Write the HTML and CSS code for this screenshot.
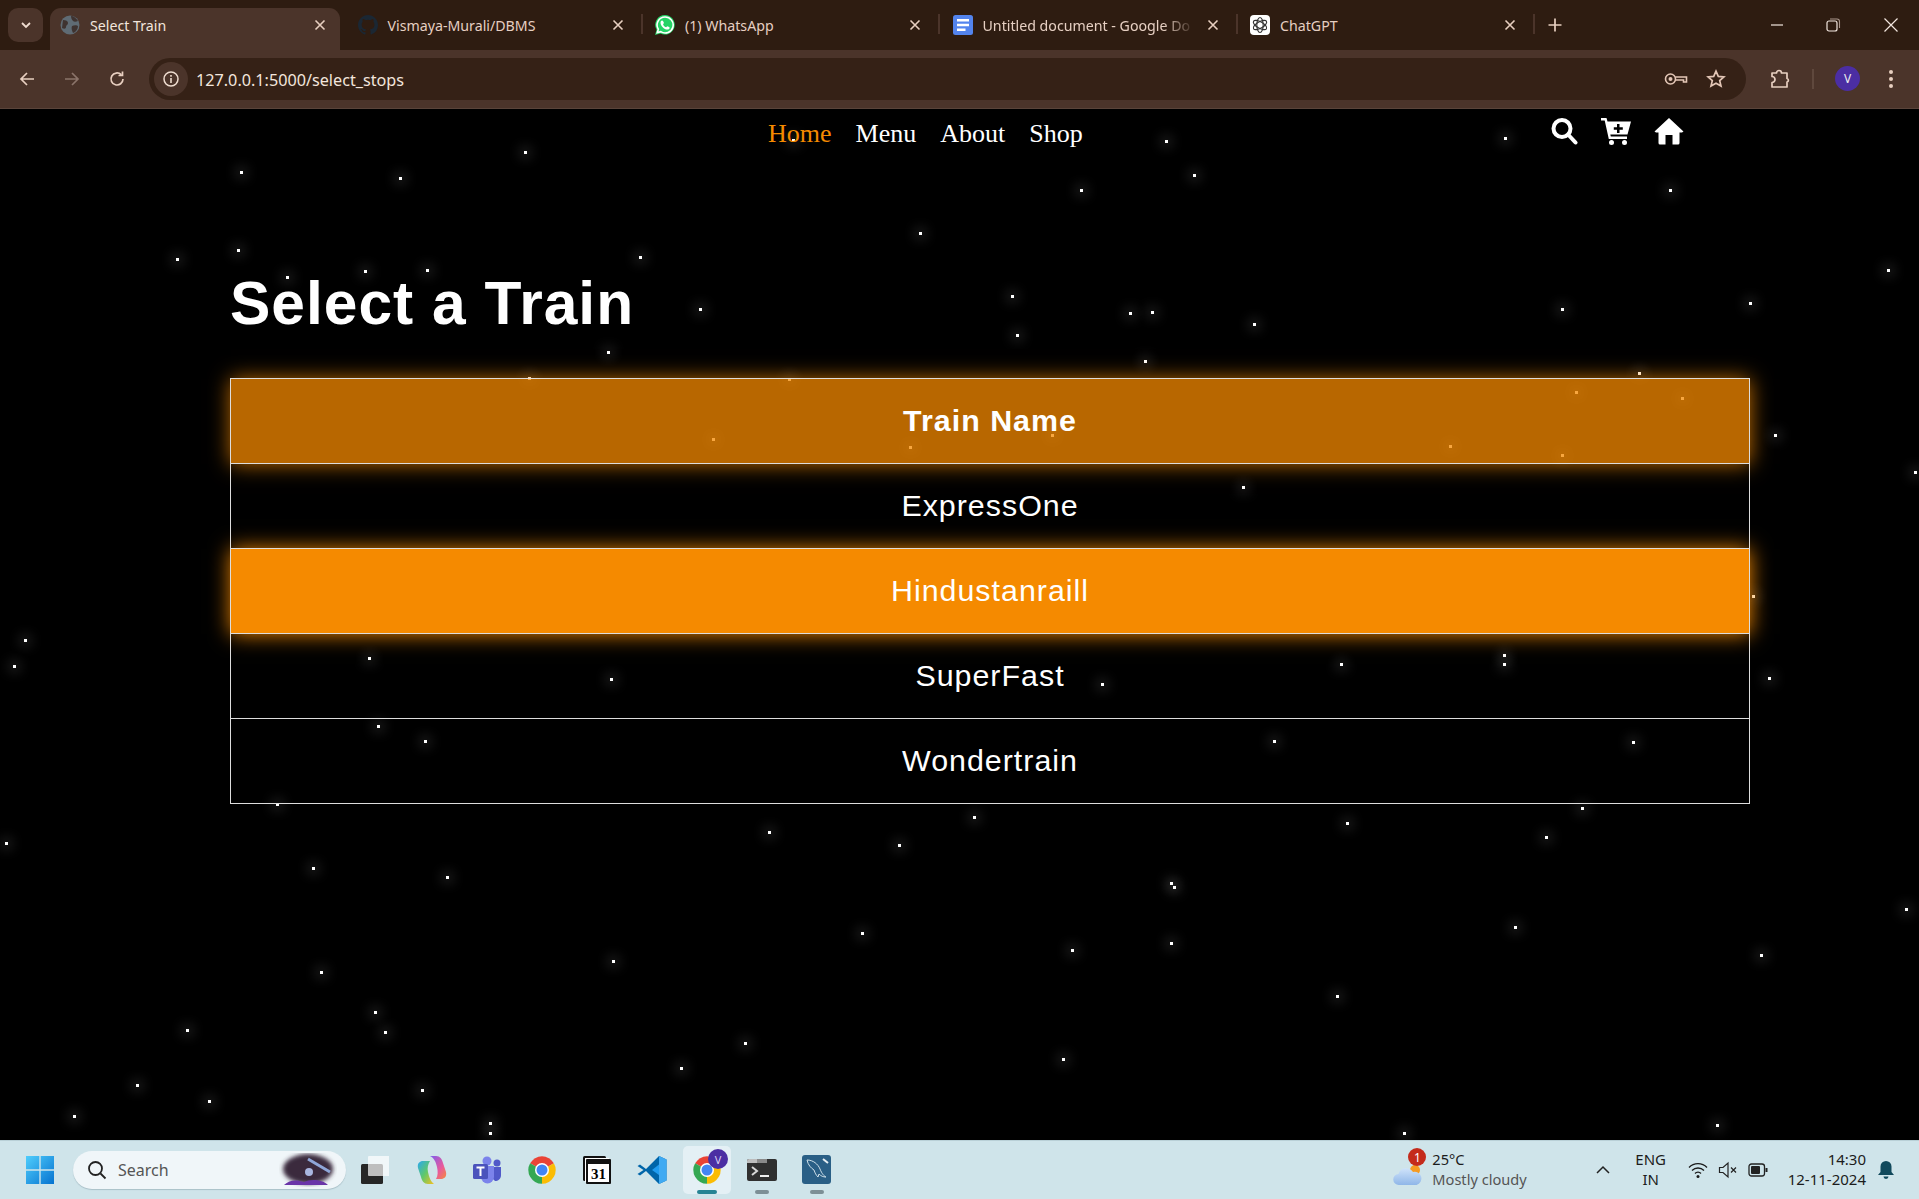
FILE: index.html
```html
<!DOCTYPE html>
<html lang="en">
<head>
    <meta charset="UTF-8">
    <meta name="viewport" content="width=device-width, initial-scale=1.0">
    <title>Select Train</title>
    <link rel="stylesheet" href="styles.css">
</head>
<body>
    <svg class="defs" width="0" height="0">
        <symbol id="chrome" viewBox="0 0 24 24">
            <path fill="#ea4335" d="M12 12L2.500 6.500A11 11 0 0 1 21.500 6.500Z"/>
            <path fill="#fbbc04" d="M12 12L21.500 6.500A11 11 0 0 1 12 23Z"/>
            <path fill="#34a853" d="M12 12L12 23A11 11 0 0 1 2.500 6.500Z"/>
            <circle cx="12" cy="12" r="5.600" fill="#fff"/>
            <circle cx="12" cy="12" r="4.400" fill="#4285f4"/>
        </symbol>
        <symbol id="close" viewBox="0 0 16 16">
            <path d="M3.500 3.500l9 9M12.500 3.500l-9 9" stroke="#e8cfc0" stroke-width="1.600" fill="none"/>
        </symbol>
    </svg>

    <!-- browser tabs -->
    <div class="tabstrip">
        <button class="tab-search">
            <svg width="12" height="12" viewBox="0 0 12 12"><path d="M2 4l4 4 4-4" stroke="#f0dcd0" stroke-width="1.800" fill="none"/></svg>
        </button>
        <div class="tabs">
            <div class="tab active">
                <svg class="favicon" viewBox="0 0 20 20"><circle cx="10" cy="10" r="9.500" fill="#5f6b74"/><path d="M3 5c3 0 5 1 5 3s-2 2-2 4-2 2-4 1zM11 1c3 0 5 2 7 5-2 1-4 1-5 0s-2-3-2-5zM12 11c2-1 5-1 6 0 0 3-2 6-5 7-1-2-2-5-1-7z" fill="#3f3330"/></svg>
                <span class="tab-title">Select Train</span>
                <svg class="tab-close"><use href="#close"/></svg>
            </div>
            <div class="tab">
                <svg class="favicon" viewBox="0 0 16 16"><path fill="#1b2733" d="M8 0C3.580 0 0 3.580 0 8c0 3.540 2.290 6.530 5.470 7.590.4.070.55-.17.55-.38v-1.490c-2.010.37-2.530-.49-2.690-.94-.09-.23-.48-.94-.82-1.130-.28-.15-.68-.52-.01-.53.63-.01 1.080.58 1.230.82.72 1.210 1.870.87 2.330.66.070-.52.28-.87.51-1.070-1.780-.2-3.640-.89-3.640-3.950 0-.87.31-1.590.82-2.150-.08-.2-.36-1.020.08-2.120 0 0 .67-.21 2.200.82a7.600 7.600 0 0 1 4 0c1.530-1.040 2.200-.82 2.200-.82.44 1.100.16 1.920.08 2.120.51.56.82 1.270.82 2.150 0 3.070-1.870 3.750-3.650 3.950.29.25.54.73.54 1.480v2.200c0 .21.15.46.55.38A8 8 0 0 0 16 8c0-4.420-3.580-8-8-8z"/></svg>
                <span class="tab-title">Vismaya-Murali/DBMS</span>
                <svg class="tab-close"><use href="#close"/></svg>
            </div>
            <div class="tab">
                <svg class="favicon" viewBox="0 0 20 20"><path fill="#25d366" d="M10 0a9.800 9.800 0 0 0-8.400 14.800L0 20l5.400-1.500A9.800 9.800 0 1 0 10 0z"/><path fill="none" stroke="#fff" stroke-width="1.600" d="M10 2a8 8 0 0 0-6.700 12.200l-1 3.400 3.500-.9A8 8 0 1 0 10 2z"/><path fill="#fff" d="M7 5.500c-.6 0-1.500.9-1.500 2.300 0 3 3.600 6.800 6.900 6.800 1.300 0 2.300-1 2.300-1.900 0-.5-2-1.500-2.400-1.500-.4 0-.8 1-1.200 1-.8 0-3-2-3-3 0-.4.8-.8.8-1.300 0-.4-.9-2.400-1.900-2.400z"/></svg>
                <span class="tab-title">(1) WhatsApp</span>
                <svg class="tab-close"><use href="#close"/></svg>
            </div>
            <div class="tab">
                <svg class="favicon" viewBox="0 0 20 20"><rect width="20" height="20" rx="2.500" fill="#5384ee"/><path fill="#fff" d="M4 4h12v2.500H4zM4 8.800h12v2.500H4zM4 13.500h8.500V16H4z"/></svg>
                <span class="tab-title tab-fade">Untitled document - Google Do</span>
                <svg class="tab-close"><use href="#close"/></svg>
            </div>
            <div class="tab">
                <svg class="favicon" viewBox="0 0 20 20"><rect width="20" height="20" rx="4" fill="#fff"/><g fill="none" stroke="#333" stroke-width="1.100"><ellipse cx="10" cy="10" rx="3.200" ry="7.500"/><ellipse cx="10" cy="10" rx="3.200" ry="7.500" transform="rotate(60 10 10)"/><ellipse cx="10" cy="10" rx="3.200" ry="7.500" transform="rotate(120 10 10)"/></g></svg>
                <span class="tab-title">ChatGPT</span>
                <svg class="tab-close"><use href="#close"/></svg>
            </div>
        </div>
        <svg class="new-tab" width="16" height="16" viewBox="0 0 16 16"><path d="M8 1.500v13M1.500 8h13" stroke="#e8cfc0" stroke-width="1.700"/></svg>
        <div class="window-controls">
            <svg width="16" height="16" viewBox="0 0 16 16"><path d="M2 8h12" stroke="#f2e6df" stroke-width="1.200"/></svg>
            <svg width="16" height="16" viewBox="0 0 16 16"><rect x="2" y="4" width="10" height="10" rx="2" fill="none" stroke="#f2e6df" stroke-width="1.200"/><path d="M5 2h7a2.500 2.500 0 0 1 2.500 2.500V11" fill="none" stroke="#a9968b" stroke-width="1.100"/></svg>
            <svg width="16" height="16" viewBox="0 0 16 16"><path d="M1.500 1.500l13 13M14.500 1.500l-13 13" stroke="#f2e6df" stroke-width="1.200"/></svg>
        </div>
    </div>

    <!-- address bar -->
    <div class="toolbar">
        <div class="nav-buttons">
            <svg width="20" height="20" viewBox="0 0 20 20"><path d="M17 10H4M10 4l-6 6 6 6" fill="none" stroke="#e8cfc0" stroke-width="1.700"/></svg>
            <svg width="20" height="20" viewBox="0 0 20 20"><path d="M3 10h13M10 4l6 6-6 6" fill="none" stroke="#8b746a" stroke-width="1.700"/></svg>
            <svg width="20" height="20" viewBox="0 0 20 20"><path d="M16 10a6 6 0 1 1-1.800-4.300M15.500 2.500v4h-4" fill="none" stroke="#e8cfc0" stroke-width="1.700"/></svg>
        </div>
        <div class="omnibox">
            <span class="site-info">
                <svg width="18" height="18" viewBox="0 0 18 18"><circle cx="9" cy="9" r="7" fill="none" stroke="#eedccf" stroke-width="1.500"/><path d="M9 8v5M9 5v1.700" stroke="#eedccf" stroke-width="1.600"/></svg>
            </span>
            <span class="url">127.0.0.1:5000/select_stops</span>
            <svg class="omni-key" width="24" height="16" viewBox="0 0 24 16"><circle cx="6.500" cy="8" r="5" fill="none" stroke="#e3c6b6" stroke-width="1.600"/><circle cx="6.500" cy="8" r="2" fill="#e3c6b6"/><path d="M11.500 6h11v5h-3V9h-8" fill="none" stroke="#e3c6b6" stroke-width="1.600"/></svg>
            <svg class="omni-star" width="20" height="20" viewBox="0 0 20 20"><path d="M10 2.200l2.300 5.200 5.600.5-4.200 3.700 1.300 5.500-5-2.900-5 2.900 1.300-5.500-4.200-3.700 5.600-.5z" fill="none" stroke="#e3c6b6" stroke-width="1.700"/></svg>
        </div>
        <svg class="puzzle" width="22" height="22" viewBox="0 0 22 22"><path d="M3 5h4.500a2.500 2.500 0 0 1 5 0H18v5.500a1.800 1.800 0 0 1 0 3.500V19H3v-4.500a3 3 0 0 0 0-6z" fill="none" stroke="#e8cfc0" stroke-width="1.700" stroke-linejoin="round"/></svg>
        <span class="toolbar-sep"></span>
        <span class="avatar">V</span>
        <svg class="menu-dots" width="6" height="20" viewBox="0 0 6 20"><circle cx="3" cy="3" r="2" fill="#e8cfc0"/><circle cx="3" cy="10" r="2" fill="#e8cfc0"/><circle cx="3" cy="17" r="2" fill="#e8cfc0"/></svg>
    </div>

    <!-- the page -->
    <main class="page">
        <div id="stars" class="stars"></div>
        <nav class="navbar">
            <ul class="nav-links">
                <li><a class="current" href="#">Home</a></li>
                <li><a href="#">Menu</a></li>
                <li><a href="#">About</a></li>
                <li><a href="#">Shop</a></li>
            </ul>
            <div class="nav-icons">
                <svg width="28" height="28" viewBox="0 0 28 28"><circle cx="12" cy="11.500" r="8.500" fill="none" stroke="#fff" stroke-width="4"/><path d="M18.500 18l7 7.500" stroke="#fff" stroke-width="4" stroke-linecap="round"/></svg>
                <svg width="32" height="28" viewBox="0 0 32 28"><path fill="#fff" fill-rule="evenodd" d="M1 1h5.500l1 3.500H31l-3.500 13H10.300l.5 2H27v2.500H8.800L4.700 3.500H1zM17 7v3.200h-3.200v2.500H17V16h2.500v-3.300h3.300v-2.500h-3.300V7z"/><circle cx="11.500" cy="25.500" r="2.500" fill="#fff"/><circle cx="24.500" cy="25.500" r="2.500" fill="#fff"/></svg>
                <svg width="30" height="28" viewBox="0 0 30 28"><path fill="#fff" d="M15 1L29.500 14.500 28 15.500H25.500V26a1.500 1.500 0 0 1-1.500 1.500H18.500V18h-7v9.500H6A1.500 1.500 0 0 1 4.500 26V15.500H2L.5 14.500z"/></svg>
            </div>
        </nav>

        <div class="content">
            <h1>Select a Train</h1>
            <table class="train-table">
                <thead>
                    <tr><th>Train Name</th></tr>
                </thead>
                <tbody>
                    <tr><td>ExpressOne</td></tr>
                    <tr><td class="hovered">Hindustanraill</td></tr>
                    <tr><td>SuperFast</td></tr>
                    <tr><td>Wondertrain</td></tr>
                </tbody>
            </table>
        </div>
    </main>

    <!-- windows taskbar -->
    <footer class="taskbar">
        <div class="task-left">
            <svg class="start" width="30" height="30" viewBox="0 0 30 30">
                <defs><linearGradient id="win" x1="0" y1="0" x2="1" y2="1"><stop offset="0" stop-color="#4fcdfc"/><stop offset="1" stop-color="#0673d0"/></linearGradient></defs>
                <path fill="url(#win)" d="M1 1h13.300v13.300H1zM15.700 1H29v13.300H15.700zM1 15.700h13.300V29H1zM15.700 15.700H29V29H15.700z"/>
            </svg>
            <div class="task-search">
                <svg width="20" height="20" viewBox="0 0 20 20"><circle cx="8.500" cy="8.500" r="6.500" fill="none" stroke="#222" stroke-width="1.800"/><path d="M13.500 13.500l5 5" stroke="#222" stroke-width="1.800"/></svg>
                <span>Search</span>
                <svg class="search-art" width="58" height="34" viewBox="0 0 58 34">
                    <defs><filter id="soft"><feGaussianBlur stdDeviation="2"/></filter></defs>
                    <ellipse cx="29" cy="16" rx="25" ry="15" fill="#3a2a3c" filter="url(#soft)"/>
                    <path d="M29 6l22 13" stroke="#8fa6d8" stroke-width="3"/>
                    <circle cx="30" cy="19" r="4" fill="#a9b6e0"/>
                    <path d="M5 32c6-6 14-5 20-3 6-3 18-3 24 3z" fill="#6a35a8"/>
                </svg>
            </div>
            <div class="task-icons">
                <span class="task-icon">
                    <svg width="30" height="30" viewBox="0 0 30 30"><rect x="2" y="9" width="22" height="20" rx="1.500" fill="#262626"/><rect x="9" y="1" width="22" height="20" rx="1" fill="#fff" opacity=".7"/></svg>
                </span>
                <span class="task-icon">
                    <svg width="30" height="30" viewBox="0 0 30 30">
                        <defs><linearGradient id="cop1" x1="0" y1="0" x2="1" y2="1"><stop offset="0" stop-color="#2aa8f0"/><stop offset=".5" stop-color="#5fc86a"/><stop offset="1" stop-color="#f6c020"/></linearGradient><linearGradient id="cop2" x1="0" y1="0" x2="1" y2="1"><stop offset="0" stop-color="#7c5cf0"/><stop offset=".6" stop-color="#e85a9c"/><stop offset="1" stop-color="#f58a3c"/></linearGradient></defs>
                        <path fill="url(#cop2)" d="M13 1h6c4 0 6 3 7 7l3 9c1 5-2 7-5 7h-5c2-3 2-8 1-12-1-5-3-9-7-11z"/>
                        <path fill="url(#cop1)" d="M17 29h-6c-4 0-6-3-7-7l-3-9c-1-5 2-7 5-7h7c-2 3-3 7-2 11 1 5 3 10 6 12z"/>
                    </svg>
                </span>
                <span class="task-icon">
                    <svg width="30" height="30" viewBox="0 0 30 30"><circle cx="15" cy="6" r="4.500" fill="#7b83eb"/><circle cx="25" cy="8" r="3.500" fill="#5059c9"/><path d="M21 12h8v8c0 4-3 6-6 6l-2-2z" fill="#5059c9"/><path d="M9 11h13v11a6.500 6.500 0 0 1-13 0z" fill="#7b83eb"/><rect x="1" y="9" width="15" height="15" rx="1.500" fill="#4b53bc"/><path d="M4.500 12.500h8M8.500 12.500V21" stroke="#fff" stroke-width="2"/></svg>
                </span>
                <span class="task-icon">
                    <svg width="30" height="30"><use href="#chrome"/></svg>
                </span>
                <span class="task-icon">
                    <svg width="30" height="30" viewBox="0 0 30 30"><rect x="1" y="1" width="23" height="25" rx="1.500" fill="#111"/><rect x="3" y="3" width="24" height="24" fill="#fff"/><rect x="4" y="4" width="25" height="25" rx="1" fill="#111"/><rect x="6" y="9" width="21" height="18" fill="#fff"/><text x="16.500" y="24" class="cal-day">31</text></svg>
                </span>
                <span class="task-icon">
                    <svg width="30" height="30" viewBox="0 0 30 30"><path fill="#0065a9" d="M22 1L9 14 3 9.500 .5 11l6 4-6 4L3 20.500 9 16l13 13 7.500-3.500V4.500z"/><path fill="#1f9cf0" d="M22 1l7.500 3.500v21L22 29V20l-7-5 7-5.500z"/><path fill="#fff" opacity=".15" d="M22 1v28l7.500-3.500v-21z"/></svg>
                </span>
                <span class="task-icon is-active">
                    <svg width="30" height="30"><use href="#chrome"/></svg>
                    <span class="chrome-badge">V</span>
                </span>
                <span class="task-icon is-open">
                    <svg width="30" height="30" viewBox="0 0 30 30"><rect width="30" height="22" y="4" rx="2" fill="#303030"/><path d="M0 8V6a2 2 0 0 1 2-2h8v4z" fill="#bdbdbd"/><path d="M10 4h10v4H10z" fill="#8a8a8a"/><path d="M5 12l5 4-5 4" fill="none" stroke="#d8d8d8" stroke-width="2"/><path d="M13 21h9" stroke="#eee" stroke-width="2"/></svg>
                </span>
                <span class="task-icon is-open">
                    <svg width="30" height="30" viewBox="0 0 30 30"><rect width="29" height="29" rx="3" fill="#2a5f86"/><path d="M5 5c6 0 11 4 13 9s4 7 6 8c-3 0-5-1-7-3l-1 3c-2-2-3-4-4-7-3-2-6-5-7-10z" fill="none" stroke="#cfe0ea" stroke-width="1"/><path d="M21 4l5 4" stroke="#e6eef2" stroke-width="2"/></svg>
                </span>
            </div>
        </div>
        <div class="task-right">
            <div class="weather">
                <svg class="cloud" width="30" height="26" viewBox="0 0 30 26"><defs><linearGradient id="cld" x1="0" y1="0" x2="0" y2="1"><stop offset="0" stop-color="#cfe3fa"/><stop offset="1" stop-color="#8fb6e8"/></linearGradient></defs><circle cx="22" cy="9" r="5" fill="#f59a23"/><path d="M6 24a5.500 5.500 0 0 1-.5-11A8 8 0 0 1 20 11a6.500 6.500 0 0 1 3.500 13z" fill="url(#cld)"/></svg>
                <span class="weather-badge">1</span>
                <div class="weather-text">
                    <span>25°C</span>
                    <span class="weather-sub">Mostly cloudy</span>
                </div>
            </div>
            <svg class="tray-up" width="16" height="10" viewBox="0 0 16 10"><path d="M2 8l6-6 6 6" fill="none" stroke="#222" stroke-width="1.500"/></svg>
            <div class="lang"><span>ENG</span><span>IN</span></div>
            <svg class="tray-icon" width="20" height="18" viewBox="0 0 20 18"><g fill="none" stroke="#1a1a1a" stroke-width="1.300"><path d="M1 6.500a12.500 12.500 0 0 1 18 0"/><path d="M4 9.500a8.500 8.500 0 0 1 12 0"/><path d="M7 12.500a4 4 0 0 1 6 0"/></g><circle cx="10" cy="15.500" r="1.500" fill="#1a1a1a"/></svg>
            <svg class="tray-icon" width="20" height="18" viewBox="0 0 20 18"><path d="M1.500 6.500v5H5l5 4.500V2L5 6.500z" fill="none" stroke="#222" stroke-width="1.200"/><path d="M13 6.500l5 5M18 6.500l-5 5" stroke="#222" stroke-width="1.200"/></svg>
            <svg class="tray-icon" width="20" height="14" viewBox="0 0 20 14"><rect x="1" y="1" width="15.500" height="12" rx="2.500" fill="none" stroke="#222" stroke-width="1.300"/><rect x="3" y="3" width="9" height="8" rx="1" fill="#222"/><rect x="17.500" y="5" width="2" height="4" fill="#222"/></svg>
            <div class="clock"><span>14:30</span><span>12-11-2024</span></div>
            <svg class="bell" width="18" height="20" viewBox="0 0 18 20"><path d="M9 1a5.500 5.500 0 0 1 5.500 5.500V12l2.500 3H1l2.500-3V6.500A5.500 5.500 0 0 1 9 1z" fill="#11495c"/><path d="M6.500 16.500h5a2.500 2.500 0 0 1-5 0z" fill="#11495c"/></svg>
        </div>
    </footer>

    <script>
        // star positions, measured on a 1568 wide view of the page
        const starPoints = [
            [197,141],[327,146],[429,125],[648,115],[752,191],[884,156],[953,116],[976,143],[1230,113],[1365,156],
            [145,212],[195,205],[235,227],[299,222],[349,221],[523,210],[572,253],[497,288],[827,242],[831,274],
            [924,256],[942,255],[1025,265],[1277,253],[1430,248],[1543,221],[936,295],[1340,305],[433,309],[645,310],
            [1288,321],[1375,326],[583,359],[744,366],[860,356],[1185,365],[1277,372],[1451,356],[1565,386],[1016,398],
            [1433,487],[21,523],[12,545],[302,538],[500,555],[901,559],[1096,543],[1229,536],[1229,543],[1446,554],
            [309,594],[348,606],[1041,606],[1335,607],[227,657],[5,689],[629,680],[735,691],[796,668],[1101,673],
            [1264,684],[1293,661],[256,710],[366,717],[957,722],[960,725],[705,763],[876,777],[957,771],[1238,758],
            [1439,781],[1558,743],[263,795],[501,786],[1093,814],[307,827],[315,844],[153,842],[609,853],[869,866],
            [112,887],[171,900],[345,891],[557,873],[61,912],[401,918],[401,926],[1403,920],[1148,926]
        ];
        const scale = 1919 / 1568;
        const stars = document.getElementById('stars');

        starPoints.forEach(point => {
            const star = document.createElement('span');
            star.className = 'star';
            star.style.left = Math.round(point[0] * scale - 1.5) + 'px';
            star.style.top = Math.round(point[1] * scale - 110.5) + 'px';
            stars.appendChild(star);
        });
    </script>
</body>
</html>
```

FILE: styles.css
```css
* {
    box-sizing: border-box;
}

body {
    margin: 0;
    height: 100vh;
    display: flex;
    flex-direction: column;
    overflow: hidden;
    background-color: #000;
    font-family: "Noto Sans", "Open Sans", sans-serif;
}

.defs {
    position: absolute;
}

/* tabs */
.tabstrip {
    height: 50px;
    flex: none;
    display: flex;
    align-items: flex-end;
    padding-left: 8px;
    background-color: #2e1c11;
}

.tab-search {
    width: 35px;
    height: 34px;
    margin-bottom: 8px;
    padding: 0;
    display: flex;
    align-items: center;
    justify-content: center;
    border: none;
    border-radius: 10px;
    background-color: #4b342a;
}

.tabs {
    display: flex;
    margin-left: 7px;
    gap: 7.5px;
}

.tab {
    width: 290px;
    height: 42px;
    position: relative;
    display: flex;
    align-items: center;
    gap: 10px;
    padding: 0 12px 8px 10px;
    color: #e6cfc2;
    font-size: 14.2px;
}

.tab::after {
    content: "";
    position: absolute;
    right: -5px;
    top: 6px;
    height: 20px;
    width: 2px;
    background-color: #4b342a;
}

.tab.active {
    padding-bottom: 8px;
    border-radius: 11px 11px 0 0;
    background-color: #4b342a;
    color: #f3e6dd;
}

.tab.active::after {
    display: none;
}

.favicon {
    width: 20px;
    height: 20px;
    flex: none;
}

.tab-title {
    flex: 1;
    white-space: nowrap;
}

.tab-fade {
    -webkit-mask-image: linear-gradient(to right, #000 85%, transparent 100%);
    mask-image: linear-gradient(to right, #000 85%, transparent 100%);
}

.tab-close {
    width: 16px;
    height: 16px;
    flex: none;
}

.new-tab {
    margin: 0 0 17px 17px;
}

.window-controls {
    margin-left: auto;
    margin-bottom: 17px;
    padding-right: 20px;
    display: flex;
    gap: 40px;
}

.window-controls svg:last-child {
    margin-left: 2px;
}

/* address bar */
.toolbar {
    height: 59px;
    flex: none;
    display: flex;
    align-items: center;
    padding: 0 0 1px 9px;
    background-color: #4b342a;
    border-bottom: 1px solid #5a443a;
}

.nav-buttons {
    display: flex;
    gap: 25px;
    padding: 0 8px;
}

.omnibox {
    width: 1597px;
    height: 42px;
    margin-left: 14px;
    display: flex;
    align-items: center;
    border-radius: 21px;
    background-color: #352116;
}

.site-info {
    width: 34px;
    height: 34px;
    margin-left: 5px;
    display: flex;
    align-items: center;
    justify-content: center;
    border-radius: 50%;
    background-color: #4b342a;
}

.url {
    margin-left: 8px;
    padding-top: 2px;
    color: #f3e6dd;
    font-size: 16.2px;
}

.omni-key {
    margin-left: auto;
}

.omni-star {
    margin: 0 20px 0 18px;
}

.puzzle {
    margin-left: 23px;
}

.toolbar-sep {
    width: 2px;
    height: 20px;
    margin-left: 21px;
    background-color: #5f483d;
}

.avatar {
    width: 25px;
    height: 25px;
    margin-left: 21px;
    display: flex;
    align-items: center;
    justify-content: center;
    border-radius: 50%;
    background-color: #4b2ea3;
    color: #eee;
    font-size: 12px;
}

.menu-dots {
    margin-left: 28px;
}

/* the page itself */
.page {
    flex: 1;
    position: relative;
    overflow: hidden;
    background-color: #000;
    color: #fff;
}

.stars {
    position: absolute;
    inset: 0;
}

.star {
    position: absolute;
    width: 3px;
    height: 3px;
    background-color: #fff;
    box-shadow: 0 0 12px 5px rgba(255, 255, 255, 0.1);
}

.navbar {
    position: relative;
    height: 44px;
    display: flex;
    align-items: center;
    justify-content: space-between;
    padding: 0 235px 0 768px;
}

.nav-links {
    display: flex;
    gap: 24px;
    margin: 5px 0 0;
    padding: 0;
    list-style: none;
}

.nav-links a {
    color: #fff;
    font-family: "Liberation Serif", serif;
    font-size: 26px;
    text-decoration: none;
}

.nav-links a.current {
    color: #f58a00;
}

.nav-icons {
    display: flex;
    align-items: center;
    gap: 22px;
}

.content {
    position: relative;
    padding: 0 169px 0 230px;
    font-family: "Liberation Sans", Arial, sans-serif;
}

h1 {
    margin: 116px 0 40px;
    font-size: 60.5px;
    line-height: 69px;
    letter-spacing: 1px;
}

.train-table {
    width: 100%;
    border-collapse: collapse;
    font-size: 30.4px;
    letter-spacing: 1px;
}

.train-table th,
.train-table td {
    height: 85px;
    padding: 0 0 2px;
    text-align: center;
    border: 1px solid #ddd;
}

.train-table th {
    background-color: rgba(245, 138, 0, 0.75);
    box-shadow: 0 0 20px rgba(245, 138, 0, 0.8);
}

.train-table td.hovered {
    background-color: #f58a00;
    box-shadow: 0 0 20px #f58a00;
}

/* taskbar */
.taskbar {
    height: 59px;
    flex: none;
    display: flex;
    align-items: center;
    justify-content: space-between;
    background-color: #cfe4ea;
    border-top: 1px solid #b9d0d7;
    color: #1c1c1c;
}

.task-left,
.task-right {
    display: flex;
    align-items: center;
}

.start {
    margin-left: 25px;
}

.task-search {
    width: 273px;
    height: 38px;
    margin-left: 18px;
    padding: 0 9px 0 14px;
    display: flex;
    align-items: center;
    gap: 11px;
    border-radius: 19px;
    background-color: #f0f6f9;
    box-shadow: 0 1px 1px #a9c0c8;
    color: #555;
    font-size: 16px;
}

.search-art {
    margin-left: auto;
}

.task-icons {
    display: flex;
    align-items: center;
    gap: 7px;
    margin-left: 4px;
}

.task-icon {
    width: 48px;
    height: 48px;
    position: relative;
    display: flex;
    align-items: center;
    justify-content: center;
    border-radius: 5px;
}

.task-icon:first-child {
    margin-right: 3px;
}

.cal-day {
    font-family: "Liberation Serif", serif;
    font-size: 15px;
    font-weight: bold;
    text-anchor: middle;
}

.is-active {
    background-color: #e4f0f5;
}

.is-active::after,
.is-open::after {
    content: "";
    position: absolute;
    bottom: 0;
    left: 17px;
    width: 14px;
    height: 4px;
    border-radius: 2px;
    background-color: #7d8f96;
}

.is-active::after {
    left: 14px;
    width: 20px;
    background-color: #268494;
}

.chrome-badge {
    position: absolute;
    top: 3px;
    right: 3px;
    width: 20px;
    height: 20px;
    display: flex;
    align-items: center;
    justify-content: center;
    border-radius: 50%;
    background-color: #4b2ea3;
    color: #d8cdf2;
    font-size: 11px;
}

.weather {
    position: relative;
    display: flex;
    align-items: center;
    gap: 9px;
}

.cloud {
    margin-top: 8px;
}

.weather-badge {
    position: absolute;
    left: 15px;
    top: -1px;
    width: 18px;
    height: 18px;
    display: flex;
    align-items: center;
    justify-content: center;
    border-radius: 50%;
    background-color: #c42b1c;
    color: #fff;
    font-size: 12px;
}

.weather-text {
    display: flex;
    flex-direction: column;
    margin-bottom: 2px;
    font-size: 14.6px;
    line-height: 20px;
}

.weather-sub {
    color: #555;
}

.tray-up {
    margin-left: 68px;
}

.lang {
    width: 40px;
    margin-left: 20px;
    margin-bottom: 2px;
    display: flex;
    flex-direction: column;
    align-items: center;
    font-size: 15px;
    line-height: 20px;
}

.tray-icon {
    margin-left: 10px;
}

.lang + .tray-icon {
    margin-left: 17px;
}

.clock {
    margin-left: 20px;
    margin-bottom: 2px;
    display: flex;
    flex-direction: column;
    align-items: flex-end;
    font-size: 15px;
    line-height: 20px;
}

.bell {
    margin: 0 24px 0 11px;
}
```
